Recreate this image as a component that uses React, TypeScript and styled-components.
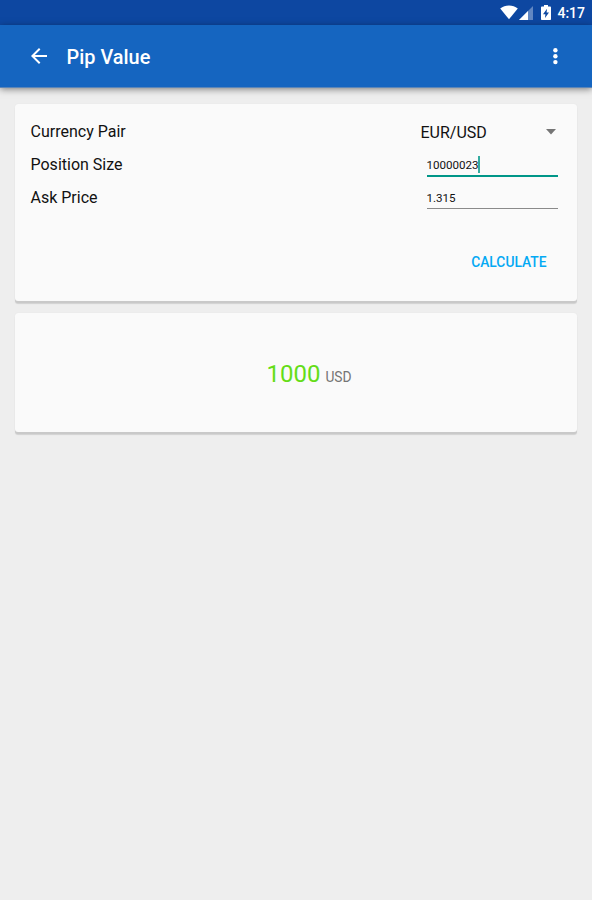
import { useState } from 'react'
import styled, { createGlobalStyle } from 'styled-components'

const colors = {
  statusBar: '#0d47a1',
  appBar: '#1565c0',
  page: '#eeeeee',
  card: '#fafafa',
  accent: '#009688',
  action: '#03a9f4',
  result: '#64dd17',
  text: '#111111',
  muted: '#757575',
}

export default function App() {
  const [size, setSize] = useState('10000023')
  const [price, setPrice] = useState('1.315')

  return (
    <>
      <GlobalStyle />
      <Screen>
        <StatusBar>
          <WifiIcon />
          <SignalIcon />
          <BatteryIcon />
          <Clock>4:17</Clock>
        </StatusBar>

        <AppBar>
          <IconButton type="button" aria-label="Back">
            <BackIcon />
          </IconButton>
          <Title>Pip Value</Title>
          <IconButton type="button" aria-label="More options">
            <MoreIcon />
          </IconButton>
        </AppBar>

        <Content>
          <FormCard>
            <Row>
              <Label>Currency Pair</Label>
              <Spinner type="button">
                EUR/USD
                <CaretIcon />
              </Spinner>
            </Row>
            <Row>
              <Label>Position Size</Label>
              <Field $active>
                <Input
                  aria-label="Position Size"
                  value={size}
                  size={1}
                  onChange={(e) => setSize(e.target.value)}
                />
                <Cursor />
              </Field>
            </Row>
            <Row>
              <Label>Ask Price</Label>
              <Field>
                <Input
                  aria-label="Ask Price"
                  value={price}
                  size={1}
                  onChange={(e) => setPrice(e.target.value)}
                />
              </Field>
            </Row>
            <Actions>
              <TextButton type="button">CALCULATE</TextButton>
            </Actions>
          </FormCard>

          <ResultCard>
            <Amount>1000</Amount>
            <Unit>USD</Unit>
          </ResultCard>
        </Content>
      </Screen>
    </>
  )
}

/* ─── Icons ─── */

function WifiIcon() {
  return (
    <svg width="18" height="15" viewBox="0 0 18 15" fill="#fff">
      <path d="M9 14.2 0.2 3.4C2.7 1.4 5.7 0.4 9 0.4s6.3 1 8.8 3Z" />
    </svg>
  )
}

function SignalIcon() {
  return (
    <svg width="14" height="14" viewBox="0 0 14 14" fill="#fff">
      <path d="M14 0v14H0Z" opacity="0.35" />
      <path d="M9 5v9H0Z" />
    </svg>
  )
}

function BatteryIcon() {
  return (
    <svg width="10" height="15" viewBox="0 0 10 15">
      <path d="M3 0h4v1.6h2.2c.5 0 .8.3.8.8v11.8c0 .5-.3.8-.8.8H.8c-.5 0-.8-.3-.8-.8V2.4c0-.5.3-.8.8-.8H3Z" fill="#fff" />
      <path d="M6 3.8 2 9.2h2.4L4 13l4-5.4H5.6Z" fill={colors.statusBar} />
    </svg>
  )
}

function BackIcon() {
  return (
    <svg width="24" height="24" viewBox="0 0 24 24" fill="#fff">
      <path d="M20 11H7.83l5.59-5.59L12 4l-8 8 8 8 1.41-1.41L7.83 13H20v-2z" />
    </svg>
  )
}

function MoreIcon() {
  return (
    <svg width="24" height="24" viewBox="0 0 24 24" fill="#fff">
      <circle cx="12.4" cy="6.3" r="2.2" />
      <circle cx="12.4" cy="12.2" r="2.2" />
      <circle cx="12.4" cy="18.1" r="2.2" />
    </svg>
  )
}

function CaretIcon() {
  return (
    <svg width="10" height="6" viewBox="0 0 10 6" fill="#757575">
      <path d="M0 0h10L5 5.4Z" />
    </svg>
  )
}

/* ─── Styles ─── */

const GlobalStyle = createGlobalStyle`
  * {
    box-sizing: border-box;
  }

  body {
    margin: 0;
    background: ${colors.page};
    font-family: Roboto, sans-serif;
    color: ${colors.text};
  }

  button,
  input {
    margin: 0;
    padding: 0;
    border: none;
    background: none;
    font: inherit;
    color: inherit;
  }

  svg {
    display: block;
    flex: none;
  }
`

const Screen = styled.div`
  display: flex;
  flex-direction: column;
  min-height: 100vh;
`

const StatusBar = styled.div`
  display: flex;
  align-items: center;
  justify-content: flex-end;
  height: 25px;
  padding: 0 7px 0 0;
  background: ${colors.statusBar};

  svg + svg {
    margin-left: 1px;
  }

  svg:nth-of-type(3) {
    margin-left: 8px;
  }
`

const Clock = styled.span`
  margin-left: 6px;
  padding-top: 1px;
  font-size: 14px;
  font-weight: 500;
  line-height: 16px;
  color: #fff;
`

const AppBar = styled.header`
  display: flex;
  align-items: center;
  height: 62px;
  margin-bottom: 1px;
  padding: 0 25px 0 26.5px;
  background: ${colors.appBar};
  color: #fff;
  box-shadow:
    0 1px 0 #5c86b8,
    0 2px 7px rgba(0, 0, 0, 0.5);
`

const IconButton = styled.button`
  cursor: pointer;
`

const Title = styled.h1`
  flex: 1;
  margin: 3px 0 0 16px;
  font-size: 19.9px;
  font-weight: 500;
  line-height: 24px;
`

const Content = styled.main`
  display: flex;
  flex-direction: column;
  gap: 12px;
  padding: 16px 15px;
`

const Card = styled.section`
  border-radius: 3px;
  background: ${colors.card};
  box-shadow:
    0 2px 0 #c9c9c9,
    0 3px 1px rgba(0, 0, 0, 0.12),
    0 0 1px rgba(0, 0, 0, 0.1);
`

const FormCard = styled(Card)`
  display: flex;
  flex-direction: column;
  height: 197px;
  padding: 11px 19.5px 0 15.5px;
`

const ResultCard = styled(Card)`
  display: flex;
  align-items: baseline;
  justify-content: center;
  gap: 5px;
  height: 119px;
  padding: 47px 0 0 26px;
`

const Row = styled.div`
  display: flex;
  align-items: center;
  justify-content: space-between;
  height: 33px;
`

const Label = styled.span`
  font-size: 16px;
  line-height: 20px;
`

const Spinner = styled.button`
  display: flex;
  align-items: center;
  justify-content: space-between;
  width: 137px;
  padding: 2px 1.5px 0 0;
  font-size: 16px;
  line-height: 20px;
  cursor: pointer;

  svg {
    margin-bottom: 2px;
  }
`

const Field = styled.div<{ $active?: boolean }>`
  display: flex;
  align-items: center;
  align-self: flex-end;
  width: 131px;
  height: 23px;
  margin-bottom: ${({ $active }) => ($active ? '4px' : '5px')};
  border-bottom: ${({ $active }) => ($active ? `2px solid ${colors.accent}` : '1px solid #8a8a8a')};
`

const Input = styled.input`
  field-sizing: content;
  padding-top: 1px;
  font-size: 11.6px;
  line-height: 16px;
  outline: none;
`

const Cursor = styled.span`
  flex: none;
  width: 2px;
  height: 17px;
  margin: 0 0 1px -1px;
  background: #33aba0;
`

const Actions = styled.div`
  display: flex;
  justify-content: flex-end;
  padding: 39px 11px 0 0;
`

const TextButton = styled.button`
  font-size: 13.8px;
  font-weight: 500;
  line-height: 18px;
  color: ${colors.action};
  cursor: pointer;
`

const Amount = styled.span`
  font-size: 24px;
  line-height: 28px;
  color: ${colors.result};
`

const Unit = styled.span`
  font-size: 13.8px;
  color: ${colors.muted};
`
